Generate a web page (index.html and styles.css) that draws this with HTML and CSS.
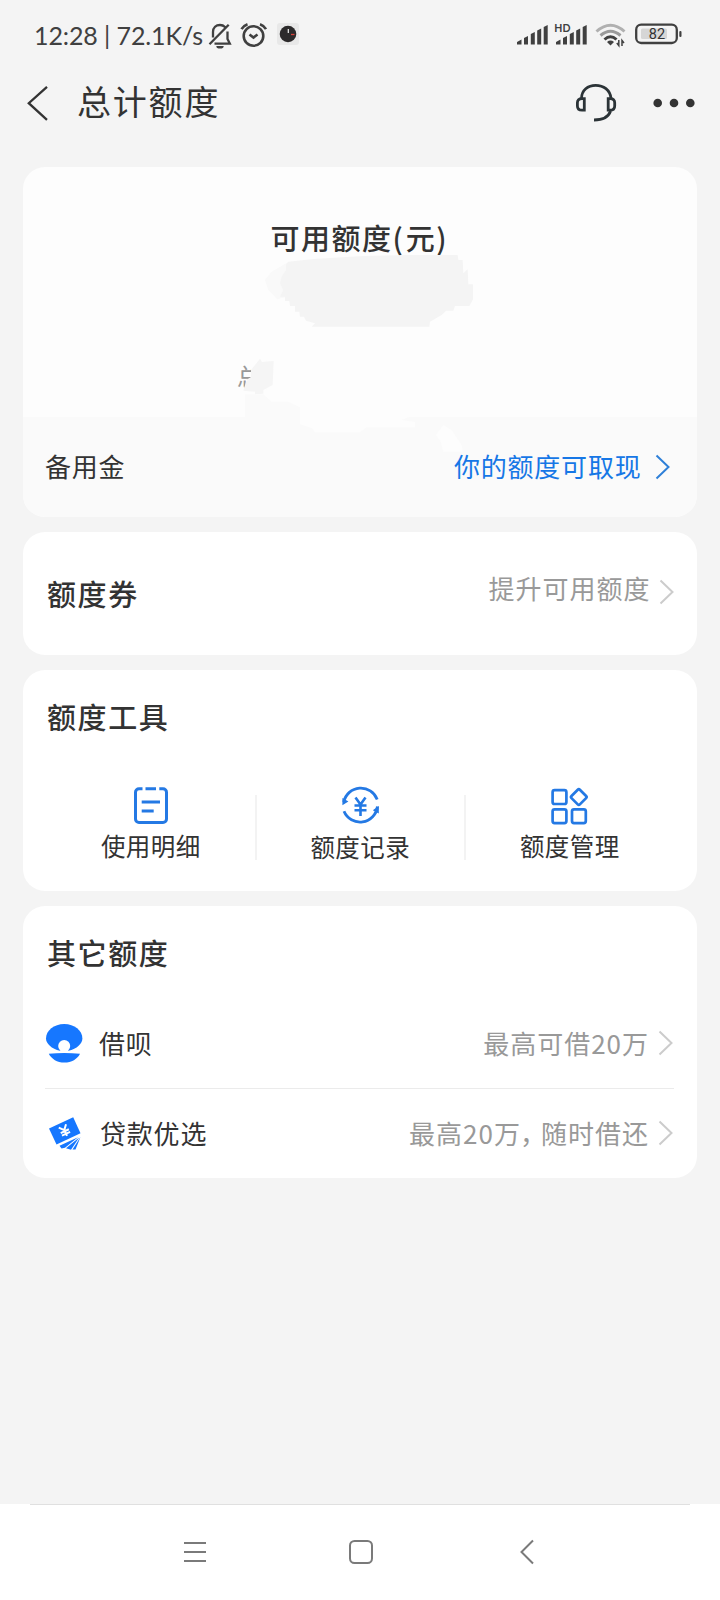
FILE: index.html
```html
<!DOCTYPE html>
<html lang="zh-CN">
<head>
<meta charset="utf-8">
<title>总计额度</title>
<link rel="stylesheet" href="styles.css">
</head>
<body>
<div class="screen">
  <div class="status">
    <span class="status-text">12:28 | 72.1K/s</span>
    <svg class="bell" width="24" height="28" viewBox="208 20 24 28" fill="none" stroke="#404040" stroke-width="2.3">
      <path d="M213 36.5V31c0-4.2 3-7 7-7 2 0 3.800.8 5 2M227.500 30.500V38l2.300 4.600H214.500M228.700 23.700L209.500 43.200"/>
      <path d="M216.300 45h7.400a3.700 2.600 0 0 1-7.400 0z" fill="#404040" stroke="none"/>
    </svg>
    <svg class="alarm" width="28" height="28" viewBox="240 20 28 28" fill="none" stroke="#404040" stroke-width="2.6">
      <circle cx="253.500" cy="35" r="9.800"/>
      <path d="M241.500 28.200q2-3.600 6-5M266 28.200q-2-3.600-6-5"/>
      <path d="M249.500 33.500l4 3 4-3"/>
    </svg>
    <svg class="app" width="22" height="22" viewBox="277 23 22 22">
      <rect x="277" y="23" width="22" height="22" rx="3" fill="#e8e8e8"/>
      <circle cx="288" cy="34" r="8.300" fill="#2c2a2b"/>
      <path d="M288.300 29v4" stroke="#eee" stroke-width="1.200"/>
      <path d="M291 34.500h3.500" stroke="#d8433c" stroke-width="1.300"/>
    </svg>
    <svg class="signal" width="32" height="22" viewBox="517 24 32 22" fill="#404040">
      <path d="M517 44.500v-2.500l4.500-2.500v5zM524 44.500v-6.500l4-2v8.500zM530.800 44.500v-10.500l4-2v12.500zM537.200 44.500v-14l4-2v16zM543.700 44.500v-17.500l4-2v19.500z"/>
    </svg>
    <svg class="signal-hd" width="34" height="28" viewBox="554 18 34 28" fill="#404040">
      <path d="M556 44.500v-2.500l4.500-2.500v5zM563 44.500v-6.500l4-2v8.500zM569.800 44.500v-10.500l4-2v12.500zM576.200 44.500v-14l4-2v16zM582.700 44.500v-17.500l4-2v19.500z"/>
      <text x="554.300" y="32" class="hd">HD</text>
    </svg>
    <svg class="wifi" width="32" height="26" viewBox="595 22 32 26" fill="none" stroke-width="3">
      <path d="M596.500 31.500q14-12.500 28 0" stroke="#b0b0b0"/>
      <path d="M600.500 35.500q10-8.500 20 0" stroke="#9a9a9a"/>
      <path d="M604.500 39.500q6-5.500 12 0" stroke="#404040"/>
      <path d="M607 42q3.500-2.800 7 0l-3.500 3.500z" fill="#404040" stroke="none"/>
      <path d="M618.800 40v5.500l-2-2.500M622 46v-5.500l2 2.500" stroke="#404040" stroke-width="1.500"/>
    </svg>
    <svg class="battery" width="48" height="22" viewBox="635 23 48 22">
      <rect x="636.200" y="24.700" width="40.600" height="18.300" rx="5" fill="none" stroke="#404040" stroke-width="2.300"/>
      <rect x="641" y="28.500" width="26" height="10.500" rx="1.500" fill="#d6d6d6"/>
      <rect x="679.300" y="31" width="2.200" height="6" rx="1" fill="#404040"/>
      <text x="657" y="39" text-anchor="middle" class="level">82</text>
    </svg>
  </div>

  <header class="header">
    <svg class="back" width="22" height="38" viewBox="27 84 22 38" fill="none" stroke="#333" stroke-width="2.300">
      <path d="M47 86.800L28.800 103.200 47 119.800"/>
    </svg>
    <h1 class="title">总计额度</h1>
    <svg class="service" width="42" height="42" viewBox="575 82 42 42" fill="none" stroke="#2b3337" stroke-width="2.800">
      <path d="M581.500 98.500C581.500 90 588 85.300 595.700 85.300S610.200 90 611 98.500"/>
      <path d="M584.300 98.600h-2.300c-2.800 0-4.600 1.600-4.600 4.200v3.200c0 2.600 1.800 4.200 4.600 4.200h2.300zM608.200 98.600h2c2.800 0 4.500 1.600 4.500 4.200v3.200c0 2.600-1.700 4.200-4.500 4.200h-2z"/>
      <path d="M610.600 111C608.500 117 603 120 594 120"/>
    </svg>
    <svg class="more" width="44" height="10" viewBox="652 98 44 10" fill="#333">
      <circle cx="657.700" cy="103" r="4.300"/><circle cx="674" cy="103" r="4.300"/><circle cx="690.300" cy="103" r="4.300"/>
    </svg>
  </header>

  <main class="cards">
    <section class="card quota">
      <div class="quota-top">
        <h2 class="quota-title">可用额度<span class="paren">(</span>元<span class="paren">)</span></h2>
        <span class="quota-total">总</span>
      </div>
      <div class="reserve">
        <span class="reserve-name">备用金</span>
        <span class="reserve-link">你的额度可取现</span>
        <svg class="arrow" width="16" height="26" viewBox="0 0 16 26"><path d="M1.500 1.500L13.500 13 1.500 24.500" stroke="#2f80d8" stroke-width="2"/></svg>
      </div>
      <svg class="smudge" width="674" height="350" viewBox="23 167 674 350">
        <g transform="translate(200 200) scale(.33333)">
          <path fill="#f9f9f9" d="M195 240L215 215 265 186 260 290 232 298 220 285 205 270z"/>
          <path fill="#f4f4f4" d="M265 185L340 177 490 168 620 165H773L775 180H788L790 220 803 208 805 253H819V298L808 318H765L760 332H738L725 345 690 365 688 380H335L345 370 318 362 312 350H300L298 335H285V318H270L268 303H255V290H240L250 270 240 250 245 230 258 210V195z"/>
          <path fill="#fdfdfd" d="M153 480H200V570H138V540L153 532z"/>
          <path fill="#f5f5f5" d="M153 510L180 476 186 486 221 483 218 555 190 570V581L165 583V575L130 572 138 545 153 532z"/>
          <path fill="#fafafa" d="M135 583H190L215 605H265L300 622V655H135z"/>
          <path fill="#fdfdfd" d="M300 648H635L605 660 645 666V682H500L480 697H345L335 684 300 672zM707 705L730 675 755 690 785 735 788 755H730L722 725z"/>
        </g>
      </svg>
    </section>

    <section class="card coupon">
      <h2 class="heading">额度券</h2>
      <span class="note coupon-note">提升可用额度</span>
      <svg class="arrow" width="16" height="26" viewBox="0 0 16 26"><path d="M1.500 1.500L13.500 13 1.500 24.500" stroke="#ccc" stroke-width="2"/></svg>
    </section>

    <section class="card tools">
      <h2 class="heading">额度工具</h2>
      <div class="tool-row">
        <div class="tool">
          <svg width="42" height="42" viewBox="130 784 42 42" fill="none" stroke="#2479e4" stroke-width="3">
            <path d="M142.500 787.800h-3.500a3.500 3.500 0 0 0-3.500 3.500v26.700a3.500 3.500 0 0 0 3.500 3.500h24a3.500 3.500 0 0 0 3.500-3.500v-26.700a3.500 3.500 0 0 0-3.500-3.500h-3.700M145.500 787.800h10.500M141.700 801h18.300M141.700 810h12"/>
          </svg>
          <span>使用明细</span>
        </div>
        <div class="tool shifted">
          <svg width="42" height="42" viewBox="339 784 42 42" fill="none" stroke="#2479e4" stroke-width="2.800">
            <path d="M343.800 801A17.400 17.400 0 0 1 377.200 798.500M377.400 805.500A17.400 17.400 0 0 1 344 810.300"/>
            <path d="M342.400 797v7.200l6-3.800zM378.800 812.500v-7.500l-6 4.300z" fill="#2479e4" stroke="none"/>
            <path d="M355.500 796.500l5 7 5-7M354.500 804.500h12M354.500 809.200h12M360.500 803v12" stroke-width="2.600"/>
          </svg>
          <span>额度记录</span>
        </div>
        <div class="tool">
          <svg width="42" height="42" viewBox="549 784 42 42" fill="none" stroke="#2479e4" stroke-width="2.700">
            <rect x="552.600" y="789.200" width="13.800" height="13.800" rx="2"/>
            <rect x="552.600" y="808.300" width="13.800" height="13.800" rx="2"/>
            <rect x="572" y="808.300" width="13.800" height="13.800" rx="2"/>
            <rect x="572.900" y="790.200" width="11.800" height="11.800" rx="1.500" transform="rotate(45 578.800 796.100)"/>
          </svg>
          <span>额度管理</span>
        </div>
      </div>
    </section>

    <section class="card other">
      <h2 class="heading">其它额度</h2>
      <div class="row">
        <svg class="row-icon" width="38" height="40" viewBox="45 1023 38 40" fill="#1677ff">
          <path d="M60 1050.800C51.500 1049 46 1043.500 46 1038.500 46 1030.500 54 1024 64.200 1024S82.400 1030.500 82.400 1038.500C82.400 1043.500 77 1049 68.400 1050.800z"/>
          <circle cx="64.200" cy="1046" r="6" fill="#fff"/>
          <path d="M48.800 1053.700Q64.200 1052.200 80 1053.700C77.500 1059 71.500 1062.500 64.300 1062.500S51.500 1059 48.800 1053.700z"/>
        </svg>
        <span class="row-name">借呗</span>
        <span class="note">最高可借20万</span>
        <svg class="arrow" width="16" height="26" viewBox="0 0 16 26"><path d="M1.500 1.500L13.500 13 1.500 24.500" stroke="#ccc" stroke-width="2"/></svg>
      </div>
      <div class="row second">
        <svg class="row-icon" width="38" height="40" viewBox="45 1113 38 40" fill="#1677ff">
          <path d="M49 1128.500L73.200 1117.300 80.500 1133.300 56.500 1144.500z"/>
          <path d="M59.500 1145.800L78 1137.200 65 1147.800 61.500 1148.500zM66 1148.300L79.200 1137.500 71 1149.800zM72.500 1149.500L80.500 1137 75.500 1149.500z"/>
          <path d="M-4-5L0-.5 4-5M-4.500.7h9M-4.500 3.600h9M0-.5v6.500" transform="translate(64.500 1130.500) rotate(-25)" fill="none" stroke="#fff" stroke-width="2"/>
        </svg>
        <span class="row-name">贷款优选</span>
        <span class="note">最高20万<span class="comma">，</span>随时借还</span>
        <svg class="arrow" width="16" height="26" viewBox="0 0 16 26"><path d="M1.500 1.500L13.500 13 1.500 24.500" stroke="#ccc" stroke-width="2"/></svg>
      </div>
    </section>
  </main>

  <nav class="nav">
    <svg width="24" height="24" viewBox="0 0 24 24" stroke="#7a7a7a" stroke-width="2"><path d="M1 3h22M1 12h22M1 21h22"/></svg>
    <svg width="26" height="26" viewBox="0 0 26 26" fill="none" stroke="#7a7a7a" stroke-width="2"><rect x="2" y="2" width="22" height="22" rx="4.500"/></svg>
    <svg width="16" height="26" viewBox="0 0 16 26" fill="none" stroke="#7a7a7a" stroke-width="2"><path d="M14 1.500L2.500 13 14 24.500"/></svg>
  </nav>
</div>
</body>
</html>
```
FILE: styles.css
```css
* { box-sizing: border-box; }
body {
  margin: 0;
  background: #f4f4f4;
  color: #333;
  font-family: "Noto Sans CJK SC", sans-serif;
}
h1, h2 { margin: 0; }
svg { display: block; flex: none; }
.screen {
  width: 720px;
  height: 1600px;
  display: flex;
  flex-direction: column;
  overflow: hidden;
}

.status {
  height: 68px;
  display: flex;
  align-items: center;
  padding-left: 34px;
}
.status-text {
  width: 174px;
  padding-top: 1px;
  color: #404040;
  font: 25px/34px Lato, sans-serif;
  letter-spacing: -.1px;
  white-space: nowrap;
}
.bell, .alarm { margin-top: 1px; }
.alarm { margin-left: 8px; }
.app { margin-left: 9px; }
.signal { margin-left: 218px; margin-top: 2px; }
.signal-hd { margin-left: 5px; margin-top: -4px; }
.wifi { margin-left: 7px; margin-top: 2px; }
.battery { margin-left: 8px; }
.hd { font: 700 10.500px Lato, sans-serif; }
.level { font: 14.500px Roboto, sans-serif; fill: #333; }

.header {
  height: 70px;
  display: flex;
  align-items: center;
  padding-left: 27px;
}
.title {
  margin-left: 28px;
  width: 498px;
  margin-top: -4px;
  font-size: 34px;
  line-height: 48px;
  font-weight: 400;
  letter-spacing: 1.800px;
}
.more { margin-left: 35px; }

.cards {
  flex: 1;
  padding: 29px 23px 0;
}
.card {
  background: #fff;
  border-radius: 22px;
}
.quota {
  position: relative;
  height: 350px;
  overflow: hidden;
  background: #fdfdfd;
}
.quota-top {
  height: 250px;
  padding-top: 50px;
}
.quota-title {
  font-size: 29px;
  line-height: 40px;
  font-weight: 500;
  letter-spacing: 1.500px;
  text-align: center;
}
.paren { letter-spacing: 3px; }
.quota-total {
  display: block;
  margin: 102px 0 0 214px;
  width: 24px;
  font-size: 24px;
  line-height: 34px;
  color: #999;
}
.reserve {
  height: 100px;
  display: flex;
  align-items: center;
  padding: 0 26px 4px 22px;
  background: #fafafa;
  font-size: 26px;
  letter-spacing: .8px;
}
.reserve-name,
.reserve-link,
.reserve .arrow { position: relative; z-index: 2; }
.reserve .arrow { margin-top: 3px; }
.reserve-link { margin-left: auto; margin-right: 13.500px; color: #1677e6; }
.smudge { position: absolute; left: 0; top: 0; z-index: 1; }
.arrow { fill: none; }

.heading {
  font-size: 29px;
  line-height: 42px;
  font-weight: 500;
  letter-spacing: 1.600px;
}
.note {
  margin-left: auto;
  margin-right: 10px;
  color: #999;
  font-size: 26px;
  line-height: 38px;
  letter-spacing: 1px;
}
.coupon {
  height: 123px;
  margin-top: 15px;
  display: flex;
  align-items: center;
  padding: 0 22px 2px 24px;
}
.coupon-note { margin-top: -10px; margin-right: 8.500px; }
.coupon .arrow { margin-top: -1px; }

.tools {
  height: 221px;
  margin-top: 15px;
  padding: 25px 23px 0;
}
.tools .heading { padding-left: 1px; }
.tool-row {
  display: grid;
  grid-template-columns: repeat(3, 209.500px);
  margin-top: 48px;
}
.tool {
  position: relative;
  height: 82px;
  display: flex;
  flex-direction: column;
  align-items: center;
  font-size: 24.500px;
  line-height: 36px;
  letter-spacing: .4px;
}
.tool svg { margin-bottom: 1px; }
.shifted svg { margin-bottom: 2px; }
.tool + .tool::before {
  content: "";
  position: absolute;
  left: -1px;
  top: 10px;
  width: 2px;
  height: 65px;
  background: #f3f3f3;
}

.other {
  height: 272px;
  margin-top: 15px;
  padding: 25px 23px 0 22px;
}
.other .heading { padding-left: 2px; }
.row {
  height: 88px;
  margin-top: 27px;
  display: flex;
  align-items: center;
  padding-bottom: 2px;
}
.row .note { margin-right: 9px; }
.row.second {
  height: 90px;
  margin-top: 0;
  border-top: 1px solid #ebebeb;
}
.row-name {
  margin-left: 16px;
  font-size: 26px;
  line-height: 38px;
  letter-spacing: .8px;
}
.second .row-name { margin-left: 17px; }
.comma { letter-spacing: -5px; margin-left: -1px; }

.nav {
  position: relative;
  height: 96px;
  display: flex;
  align-items: center;
  padding-left: 183px;
  background: #fff;
}
.nav::before {
  content: "";
  position: absolute;
  left: 30px;
  right: 30px;
  top: 0;
  height: 1px;
  background: #e0e0e0;
}
.nav svg + svg { margin-left: 141px; }
.nav svg:last-child { margin-left: 145px; }
```
